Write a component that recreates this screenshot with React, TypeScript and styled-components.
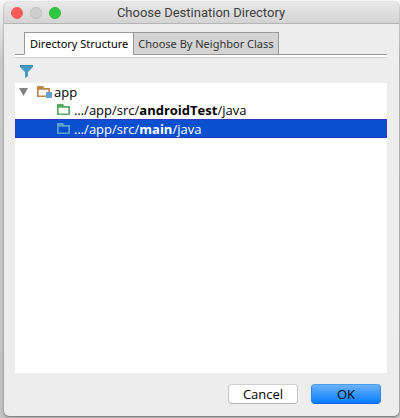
import React, { useState } from 'react';
import styled, { createGlobalStyle } from 'styled-components';

const GlobalStyle = createGlobalStyle`
  *, *::before, *::after { box-sizing: border-box; }
  body {
    margin: 0;
    background: linear-gradient(#f6f6f6, #c9c9c9 60px, #c0c0c0);
    font-family: "Open Sans", "Noto Sans", sans-serif;
    font-size: 13px;
    color: #111;
  }
`;

const Desktop = styled.div`
  display: flex;
  min-height: 100vh;
  padding: 2px 1px 2px 4px;
`;

const Window = styled.main`
  flex: 1;
  display: flex;
  flex-direction: column;
  min-width: 0;
  background: #ededed;
  border-radius: 5px;
  box-shadow: 0 0 1px 0 #777, 0 1px 2px rgba(0, 0, 0, 0.4);
  overflow: hidden;
`;

const TitleBar = styled.header`
  display: grid;
  grid-template-columns: 1fr auto 1fr;
  align-items: center;
  height: 22px;
  padding: 0 8px 0 7px;
  background: linear-gradient(#e8e8e8, #d3d3d3);
  border-bottom: 1px solid #b4b4b4;
`;

const Lights = styled.div`
  display: flex;
  gap: 7px;
`;

const Light = styled.button<{ $fill: string; $edge: string }>`
  width: 12px;
  height: 12px;
  padding: 0;
  border: 1px solid ${(p) => p.$edge};
  border-radius: 50%;
  background: ${(p) => p.$fill};
`;

const Title = styled.h1`
  margin: 0;
  font: 400 13px/20px Roboto, sans-serif;
  color: #404040;
  white-space: nowrap;
`;

const Content = styled.div`
  flex: 1;
  display: flex;
  flex-direction: column;
  padding: 8px 12px 12px 11px;
`;

const Tabs = styled.div`
  display: flex;
  height: 26px;
  border-bottom: 1px solid #d2d2d2;
  background: linear-gradient(#fff, #fff) bottom / 100% 2px no-repeat;
  padding-bottom: 2px;
`;

const TabSpace = styled.span<{ $grow?: boolean }>`
  flex: ${(p) => (p.$grow ? '1' : '0 0 9px')};
  border-bottom: 1px solid #999;
`;

const Tab = styled.button<{ $active: boolean }>`
  padding: ${(p) => (p.$active ? '0 5px' : '0 4px')};
  border: 1px solid #999;
  border-right-width: ${(p) => (p.$active ? '0' : '1px')};
  border-bottom-color: ${(p) => (p.$active ? '#fff' : '#999')};
  background: ${(p) => (p.$active ? '#fff' : '#d4d4d4')};
  color: ${(p) => (p.$active ? '#000' : '#333')};
  font: 400 11px/20px "Noto Sans", sans-serif;
  white-space: nowrap;
`;

const Toolbar = styled.div`
  display: flex;
  align-items: center;
  height: 25px;
  padding: 0 4px;
`;

const IconButton = styled.button`
  display: flex;
  padding: 0;
  border: 0;
  background: none;
`;

const Tree = styled.ul`
  flex: 1;
  margin: 0;
  padding: 0;
  list-style: none;
  background: #fff;
`;

const Row = styled.li<{ $level: number; $selected?: boolean }>`
  display: flex;
  align-items: center;
  gap: 2px;
  height: ${(p) => (p.$selected ? '19px' : '18px')};
  padding-left: ${(p) => (p.$level === 0 ? '4px' : p.$selected ? '41px' : '42px')};
  border: ${(p) => (p.$selected ? '1px solid #2a38c4' : '0')};
  background: ${(p) => (p.$selected ? '#0850d0' : 'transparent')};
  color: ${(p) => (p.$selected ? '#fff' : '#000')};
  line-height: 16px;
  white-space: nowrap;
`;

const Toggle = styled.button`
  display: flex;
  width: 16px;
  padding: 0;
  border: 0;
  background: none;
`;

const Footer = styled.footer`
  display: flex;
  justify-content: flex-end;
  gap: 13px;
  padding: 11px 6px 0;
`;

const Button = styled.button<{ $primary?: boolean }>`
  width: 70px;
  height: 20px;
  padding: 0;
  border: 1px solid;
  border-color: ${(p) => (p.$primary ? '#4a9df5 #2f87ee #0a68dc' : '#d0d0d0 #c8c8c8 #b4b4b4')};
  border-radius: 4px;
  background: ${(p) => (p.$primary ? 'linear-gradient(#6bb3fa, #077dff)' : '#fff')};
  color: #000;
  font: 400 13px/18px "Open Sans", sans-serif;
`;

const FilterIcon = () => (
  <svg width="15" height="14" viewBox="0 0 15 14" aria-hidden="true">
    <path d="M1 1h13v2L9 8v4L6 14V8L1 3z" fill="#4599c2" />
    <path d="M1 1.500h13" stroke="#3583ad" />
  </svg>
);

const FolderIcon = ({ color, module = false }: { color: string; module?: boolean }) => (
  <svg width="15" height="14" viewBox="0 0 15 14" aria-hidden="true">
    <path
      fillRule="evenodd"
      d="M0 1h6l1.500 2H13v9H0zM1.700 4.700v5.700h9.600V4.700z"
      fill={color}
    />
    {module && <path d="M9 7h6v6H9z" fill="#5fa3ca" />}
  </svg>
);

const tabNames = ['Directory Structure', 'Choose By Neighbor Class'];
const directories = [
  { name: 'androidTest', color: '#5aa963' },
  { name: 'main', color: '#5b9fcb' },
];

export default function App() {
  const [tab, setTab] = useState(0);
  const [selected, setSelected] = useState('main');
  const [open, setOpen] = useState(true);

  return (
    <>
      <GlobalStyle />
      <Desktop>
        <Window>
          <TitleBar>
            <Lights>
              <Light $fill="#fc5b57" $edge="#e9605b" aria-label="Close" />
              <Light $fill="#cfcfcf" $edge="#bdbdbd" aria-label="Minimize" />
              <Light $fill="#2dc840" $edge="#30b63c" aria-label="Zoom" />
            </Lights>
            <Title>Choose Destination Directory</Title>
          </TitleBar>
          <Content>
            <Tabs role="tablist">
              <TabSpace />
              {tabNames.map((name, i) => (
                <Tab key={name} role="tab" aria-selected={tab === i} $active={tab === i} onClick={() => setTab(i)}>
                  {name}
                </Tab>
              ))}
              <TabSpace $grow />
            </Tabs>
            <Toolbar>
              <IconButton aria-label="Filter">
                <FilterIcon />
              </IconButton>
            </Toolbar>
            <Tree role="tree">
              <Row role="treeitem" aria-expanded={open} $level={0}>
                <Toggle aria-label="Toggle app" onClick={() => setOpen(!open)}>
                  <svg width="9" height="8" viewBox="0 0 9 8" aria-hidden="true">
                    <path d="M0 0h9L4.500 8z" fill="#808080" />
                  </svg>
                </Toggle>
                <FolderIcon color="#bd874b" module />
                <span>app</span>
              </Row>
              {open &&
                directories.map(({ name, color }) => (
                  <Row
                    key={name}
                    role="treeitem"
                    aria-selected={selected === name}
                    $level={1}
                    $selected={selected === name}
                    onClick={() => setSelected(name)}
                  >
                    <FolderIcon color={color} />
                    <span>
                      …/app/src/<b>{name}</b>/java
                    </span>
                  </Row>
                ))}
            </Tree>
            <Footer>
              <Button>Cancel</Button>
              <Button $primary>OK</Button>
            </Footer>
          </Content>
        </Window>
      </Desktop>
    </>
  );
}
